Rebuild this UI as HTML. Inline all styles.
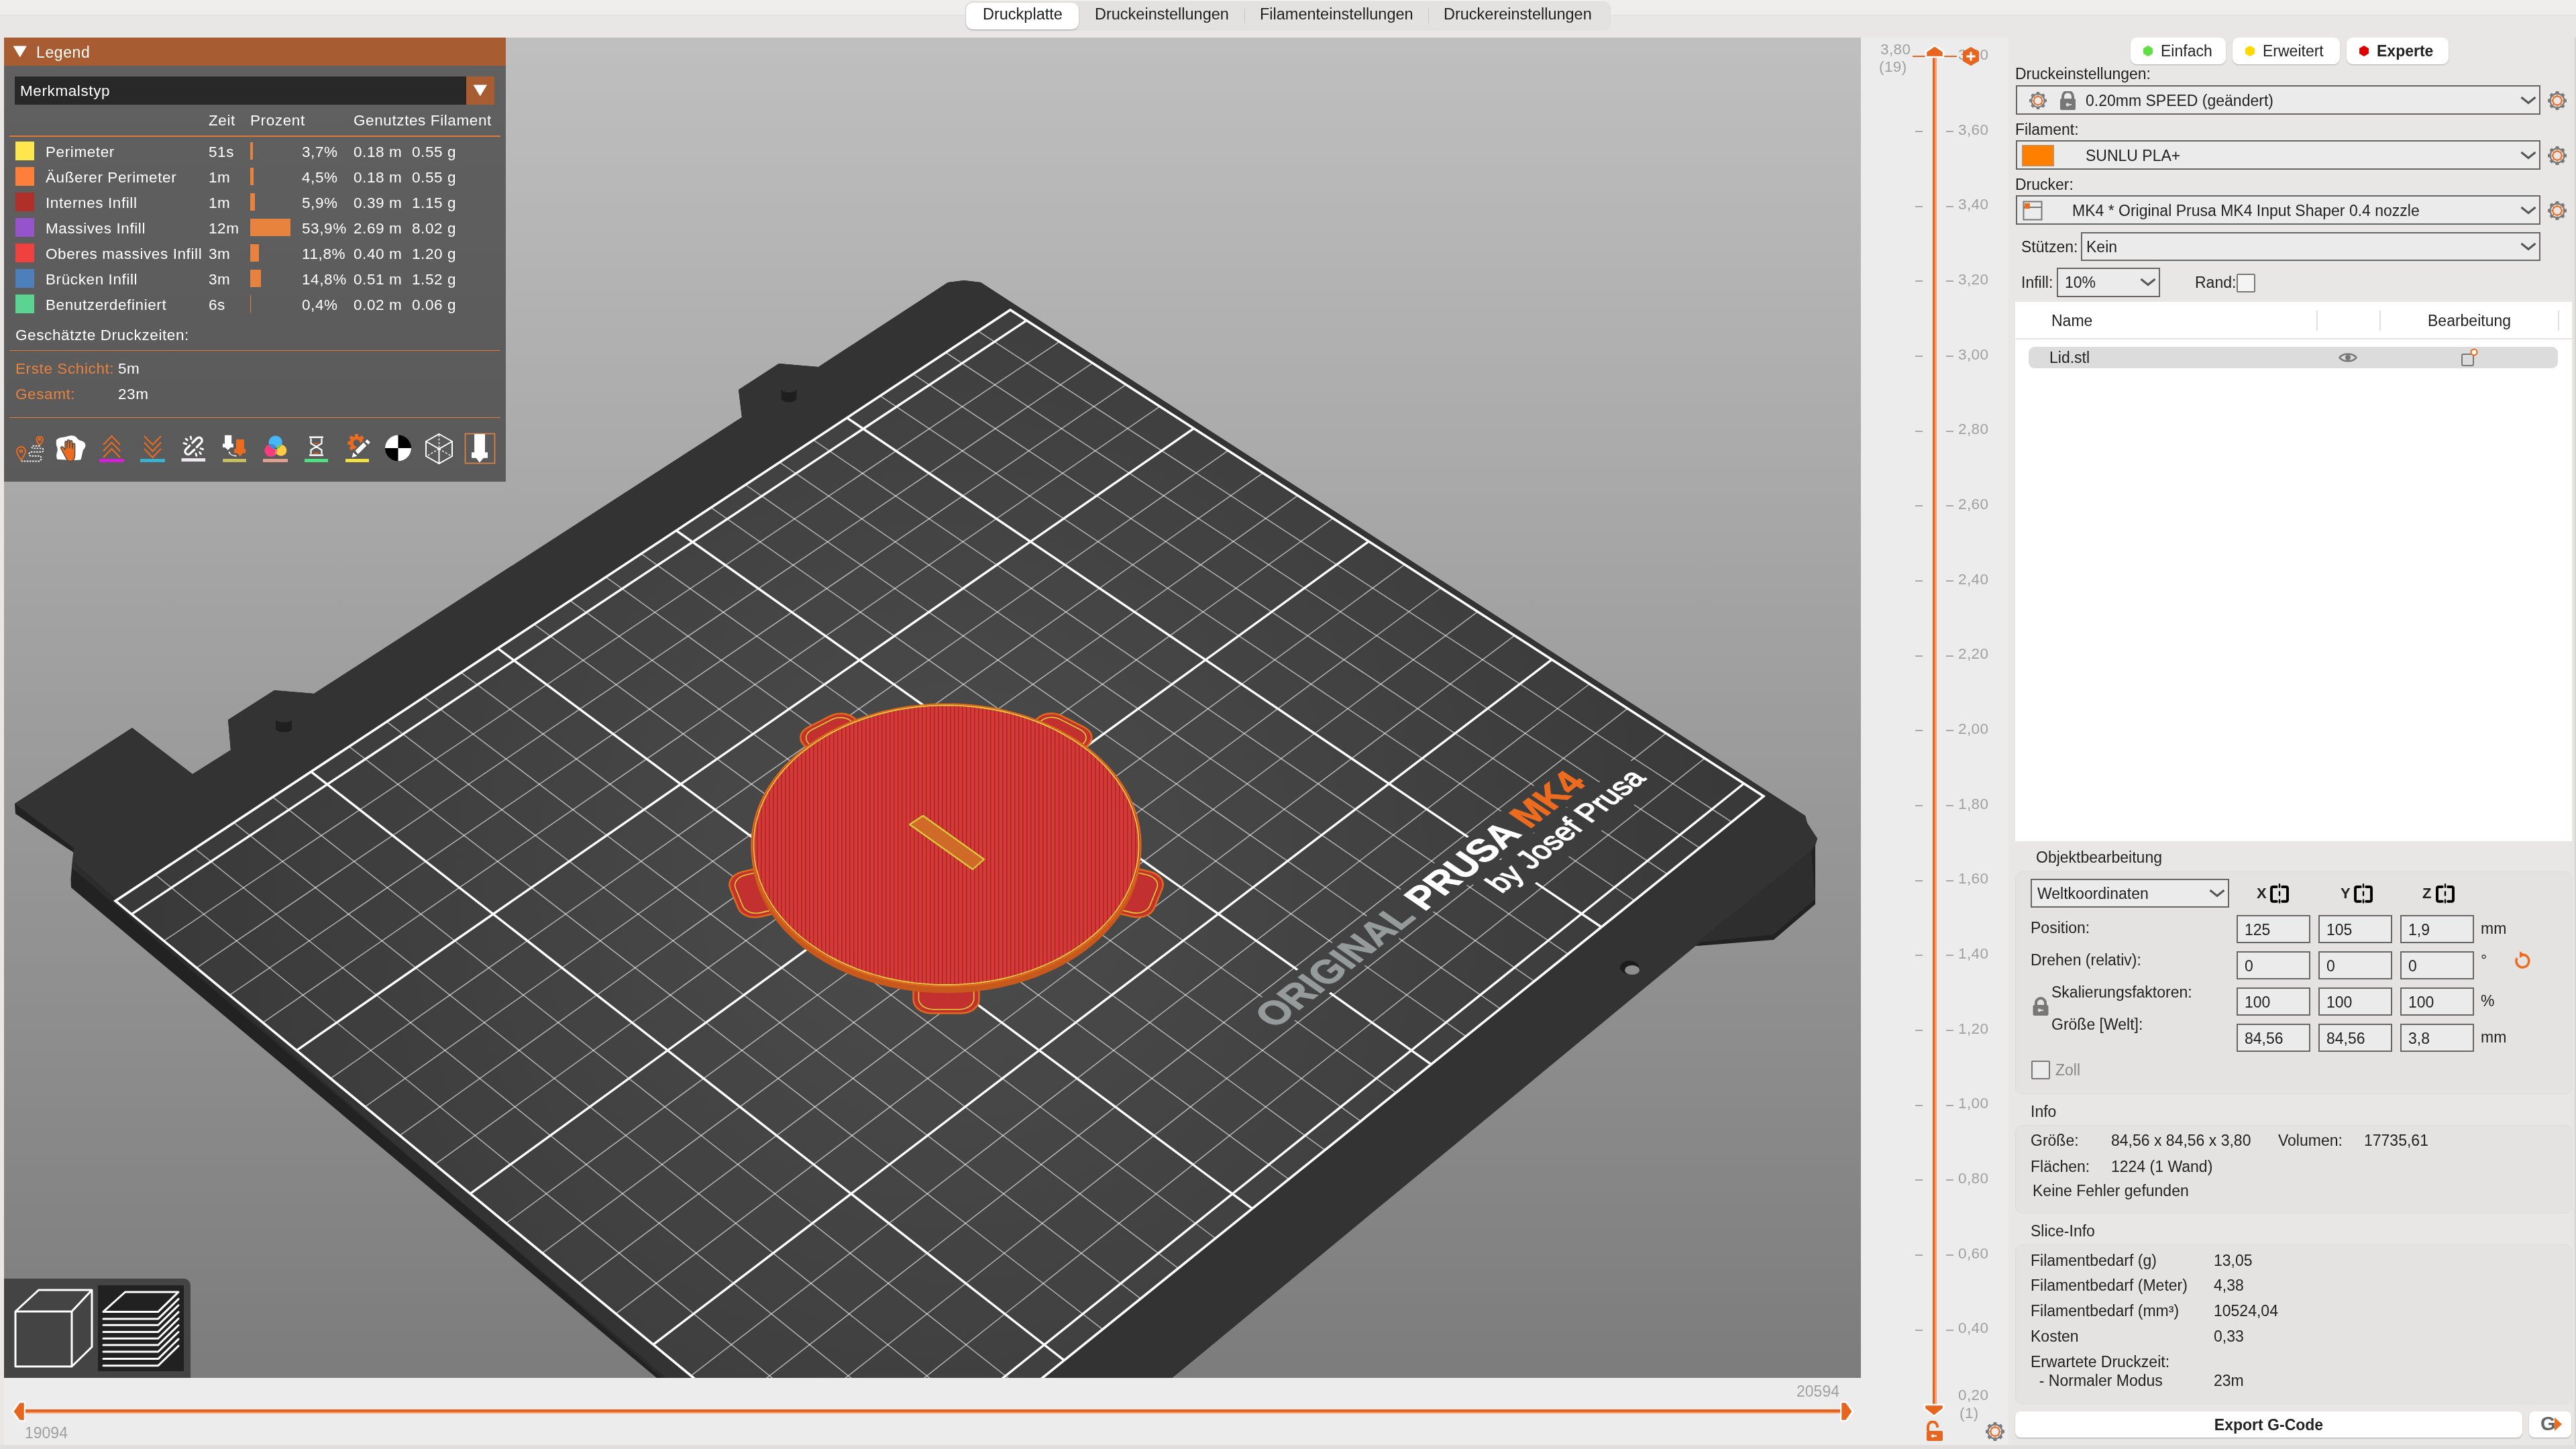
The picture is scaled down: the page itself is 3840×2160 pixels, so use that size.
<!DOCTYPE html>
<html><head><meta charset="utf-8"><style>
*{margin:0;padding:0;box-sizing:border-box}
html,body{width:3840px;height:2160px;overflow:hidden;background:#e8e7e6;font-family:"Liberation Sans",sans-serif;position:relative}
.b{position:absolute}
.t{position:absolute;line-height:1;white-space:nowrap}
.lg{letter-spacing:0.6px}
#canvas{position:absolute;left:6px;top:56px;width:2768px;height:1998px;background:linear-gradient(#bfbfbf,#7c7c7c);overflow:hidden}
#canvas svg.bed{position:absolute;left:0;top:0}
</style></head><body><div style="position:absolute;left:0;top:0;width:3840px;height:2160px;will-change:transform">
<div class="b" style="left:0px;top:0px;width:3840px;height:22px;background:#efeeed"></div>
<div class="b" style="left:0px;top:22px;width:3840px;height:34px;background:#e8e7e6;border-top:1px solid #e2e1e0"></div>
<div class="b" style="left:1439px;top:2px;width:962px;height:43px;background:#e3e2e1;border-radius:11px;border:1px solid #dddcdb"></div>
<div class="b" style="left:1440px;top:4px;width:168px;height:40px;background:#fff;border-radius:10px;box-shadow:0 1px 2px rgba(0,0,0,0.3)"></div>
<div class="t " style="left:1465px;top:9.8px;font-size:23.5px;color:#1e1e1e;">Druckplatte</div>
<div class="t " style="left:1632px;top:9.8px;font-size:23.5px;color:#1e1e1e;">Druckeinstellungen</div>
<div class="t " style="left:1878px;top:9.8px;font-size:23.5px;color:#1e1e1e;">Filamenteinstellungen</div>
<div class="t " style="left:2152px;top:9.8px;font-size:23.5px;color:#1e1e1e;">Druckereinstellungen</div>
<div class="b" style="left:1855px;top:12px;width:1px;height:23px;background:#c8c7c6"></div>
<div class="b" style="left:2129px;top:12px;width:1px;height:23px;background:#c8c7c6"></div>
<div id="canvas">
<svg class="bed" width="2768" height="1998" viewBox="0 0 2768 1998">
<defs>
<radialGradient id="areag" gradientUnits="userSpaceOnUse" cx="1400" cy="1250" r="1200">
<stop offset="0" stop-color="#4c4c4c"/><stop offset="1" stop-color="#393939"/>
</radialGradient>
<pattern id="stripes" patternUnits="userSpaceOnUse" width="6" height="6"><rect width="6" height="6" fill="#d63a36"/><rect width="1.5" height="6" fill="#a82428"/></pattern>
</defs>
<polygon points="1407.0,365.0 1431.0,362.0 1456.0,365.0 2685.0,1160.0 2688.0,1171.0 2703.0,1194.0 2700.0,1204.0 2700.0,1292.0 2638.0,1345.0 2525.0,1354.0 2517.0,1354.0 1734.0,2004.0 980.0,2004.0 100.0,1267.0 99.5,1254.0 102.0,1227.0 104.0,1215.0 17.0,1157.0 16.0,1142.0 191.0,1029.0 281.0,1098.0 338.0,1062.0 334.0,1017.0 403.0,973.0 462.0,978.0 1100.0,566.0 1095.0,525.0 1155.0,486.0 1214.0,491.0 1378.0,384.0" fill="#222222" />
<polygon points="1407.0,365.0 1431.0,362.0 1456.0,365.0 2685.0,1160.0 2688.0,1171.0 2703.0,1194.0 2700.0,1204.0 2694.0,1212.0 1734.0,2004.0 994.0,2004.0 110.0,1245.0 101.6,1238.0 102.0,1227.0 104.0,1208.0 16.0,1142.0 191.0,1029.0 281.0,1098.0 338.0,1062.0 334.0,1017.0 403.0,973.0 462.0,978.0 1100.0,566.0 1095.0,525.0 1155.0,486.0 1214.0,491.0 1378.0,384.0" fill="#333333" />
<polygon points="2694.0,1212.0 2700.0,1284.0 2638.0,1337.0 2525.0,1349.0 2517.0,1354.0" fill="#2e2e2e" />
<polygon points="102.0,1227.0 110.0,1245.0 994.0,2004.0 987.0,2004.0" fill="#2c2c2c" />
<path d="M405,1016 A12,5 0 0 0 429,1016 L429,1030 A12,5.5 0 0 1 405,1030 Z" fill="#1f1f1f"/>
<path d="M1158.5,524 A11.5,5 0 0 0 1181.5,524 L1181.5,538 A11.5,5.5 0 0 1 1158.5,538 Z" fill="#1f1f1f"/>
<ellipse cx="2423" cy="1386" rx="14" ry="10" fill="#1c1c1c"/><ellipse cx="2427" cy="1390" rx="11" ry="7" fill="#8e8e8e"/>
<polygon points="1285.0,2210.0 2623.0,1131.0 1500.0,406.0 166.0,1287.0" fill="url(#areag)"/>
<line x1="1345.3" y1="2161.4" x2="225.4" y2="1247.7" stroke="#ffffff" stroke-width="1.5" stroke-opacity="0.6"/>
<line x1="1405.0" y1="2113.2" x2="284.3" y2="1208.8" stroke="#ffffff" stroke-width="1.5" stroke-opacity="0.6"/>
<line x1="1464.1" y1="2065.6" x2="342.7" y2="1170.3" stroke="#ffffff" stroke-width="1.5" stroke-opacity="0.6"/>
<line x1="1522.5" y1="2018.4" x2="400.5" y2="1132.2" stroke="#ffffff" stroke-width="1.5" stroke-opacity="0.6"/>
<line x1="1637.6" y1="1925.6" x2="514.4" y2="1056.9" stroke="#ffffff" stroke-width="1.5" stroke-opacity="0.6"/>
<line x1="1694.3" y1="1879.9" x2="570.6" y2="1019.8" stroke="#ffffff" stroke-width="1.5" stroke-opacity="0.6"/>
<line x1="1750.4" y1="1834.7" x2="626.3" y2="983.0" stroke="#ffffff" stroke-width="1.5" stroke-opacity="0.6"/>
<line x1="1805.9" y1="1790.0" x2="681.4" y2="946.6" stroke="#ffffff" stroke-width="1.5" stroke-opacity="0.6"/>
<line x1="1915.2" y1="1701.8" x2="790.3" y2="874.7" stroke="#ffffff" stroke-width="1.5" stroke-opacity="0.6"/>
<line x1="1969.1" y1="1658.4" x2="843.9" y2="839.3" stroke="#ffffff" stroke-width="1.5" stroke-opacity="0.6"/>
<line x1="2022.4" y1="1615.4" x2="897.1" y2="804.1" stroke="#ffffff" stroke-width="1.5" stroke-opacity="0.6"/>
<line x1="2075.1" y1="1572.8" x2="949.8" y2="769.3" stroke="#ffffff" stroke-width="1.5" stroke-opacity="0.6"/>
<line x1="2179.2" y1="1488.9" x2="1053.9" y2="700.6" stroke="#ffffff" stroke-width="1.5" stroke-opacity="0.6"/>
<line x1="2230.4" y1="1447.6" x2="1105.2" y2="666.7" stroke="#ffffff" stroke-width="1.5" stroke-opacity="0.6"/>
<line x1="2281.1" y1="1406.7" x2="1156.1" y2="633.1" stroke="#ffffff" stroke-width="1.5" stroke-opacity="0.6"/>
<line x1="2331.4" y1="1366.2" x2="1206.5" y2="599.8" stroke="#ffffff" stroke-width="1.5" stroke-opacity="0.6"/>
<line x1="2430.5" y1="1286.3" x2="1306.0" y2="534.1" stroke="#ffffff" stroke-width="1.5" stroke-opacity="0.6"/>
<line x1="2479.3" y1="1246.9" x2="1355.1" y2="501.7" stroke="#ffffff" stroke-width="1.5" stroke-opacity="0.6"/>
<line x1="2527.6" y1="1207.9" x2="1403.8" y2="469.5" stroke="#ffffff" stroke-width="1.5" stroke-opacity="0.6"/>
<line x1="2575.5" y1="1169.3" x2="1452.1" y2="437.6" stroke="#ffffff" stroke-width="1.5" stroke-opacity="0.6"/>
<line x1="1196.6" y1="2137.1" x2="2535.3" y2="1074.4" stroke="#ffffff" stroke-width="1.5" stroke-opacity="0.6"/>
<line x1="1138.5" y1="2089.1" x2="2477.5" y2="1037.1" stroke="#ffffff" stroke-width="1.5" stroke-opacity="0.6"/>
<line x1="1080.9" y1="2041.7" x2="2420.3" y2="1000.1" stroke="#ffffff" stroke-width="1.5" stroke-opacity="0.6"/>
<line x1="1024.0" y1="1994.8" x2="2363.6" y2="963.5" stroke="#ffffff" stroke-width="1.5" stroke-opacity="0.6"/>
<line x1="912.1" y1="1902.4" x2="2251.8" y2="891.3" stroke="#ffffff" stroke-width="1.5" stroke-opacity="0.6"/>
<line x1="856.9" y1="1856.9" x2="2196.7" y2="855.8" stroke="#ffffff" stroke-width="1.5" stroke-opacity="0.6"/>
<line x1="802.4" y1="1811.9" x2="2142.0" y2="820.5" stroke="#ffffff" stroke-width="1.5" stroke-opacity="0.6"/>
<line x1="748.5" y1="1767.4" x2="2088.0" y2="785.6" stroke="#ffffff" stroke-width="1.5" stroke-opacity="0.6"/>
<line x1="642.2" y1="1679.8" x2="1981.2" y2="716.7" stroke="#ffffff" stroke-width="1.5" stroke-opacity="0.6"/>
<line x1="589.9" y1="1636.6" x2="1928.6" y2="682.7" stroke="#ffffff" stroke-width="1.5" stroke-opacity="0.6"/>
<line x1="538.1" y1="1593.9" x2="1876.5" y2="649.1" stroke="#ffffff" stroke-width="1.5" stroke-opacity="0.6"/>
<line x1="486.9" y1="1551.7" x2="1824.8" y2="615.7" stroke="#ffffff" stroke-width="1.5" stroke-opacity="0.6"/>
<line x1="385.9" y1="1468.4" x2="1722.9" y2="549.9" stroke="#ffffff" stroke-width="1.5" stroke-opacity="0.6"/>
<line x1="336.2" y1="1427.4" x2="1672.6" y2="517.4" stroke="#ffffff" stroke-width="1.5" stroke-opacity="0.6"/>
<line x1="286.9" y1="1386.8" x2="1622.7" y2="485.2" stroke="#ffffff" stroke-width="1.5" stroke-opacity="0.6"/>
<line x1="238.2" y1="1346.6" x2="1573.3" y2="453.3" stroke="#ffffff" stroke-width="1.5" stroke-opacity="0.6"/>
<line x1="1580.4" y1="1971.8" x2="457.7" y2="1094.4" stroke="#ffffff" stroke-width="3.4" stroke-opacity="1"/>
<line x1="1860.8" y1="1745.7" x2="736.1" y2="910.5" stroke="#ffffff" stroke-width="3.4" stroke-opacity="1"/>
<line x1="2127.4" y1="1530.7" x2="1002.1" y2="734.8" stroke="#ffffff" stroke-width="3.4" stroke-opacity="1"/>
<line x1="2381.2" y1="1326.0" x2="1256.5" y2="566.8" stroke="#ffffff" stroke-width="3.4" stroke-opacity="1"/>
<line x1="1255.4" y1="2185.6" x2="2593.6" y2="1112.0" stroke="#ffffff" stroke-width="3.4" stroke-opacity="1"/>
<line x1="967.8" y1="1948.3" x2="2307.4" y2="927.2" stroke="#ffffff" stroke-width="3.4" stroke-opacity="1"/>
<line x1="695.0" y1="1723.4" x2="2034.4" y2="751.0" stroke="#ffffff" stroke-width="3.4" stroke-opacity="1"/>
<line x1="436.1" y1="1509.8" x2="1773.6" y2="582.6" stroke="#ffffff" stroke-width="3.4" stroke-opacity="1"/>
<line x1="190.0" y1="1306.8" x2="1524.3" y2="421.7" stroke="#ffffff" stroke-width="3.4" stroke-opacity="1"/>
<polygon points="1892.4,1489.8 2372.5,1112.9 2324.3,1081.2 1844.1,1455.1" fill="url(#areag)"/>
<polygon points="2238.4,1295.4 2473.1,1109.4 2421.7,1075.9 2186.8,1260.3" fill="url(#areag)"/>
<polygon points="1285.0,2210.0 2623.0,1131.0 1500.0,406.0 166.0,1287.0" fill="none" stroke="#fff" stroke-width="3.6"/>
</svg>
<div style="position:absolute;left:0;top:0;width:2500px;height:2100px;transform-origin:0 0;transform:matrix3d(0.60526888,-0.33300162,0,0.0000477793,0.46968175,0.33087196,0,-0.0000491637,0,0,1,0,166.0000,1287.0000,0,1)"><div style="position:absolute;left:1355.0px;top:1758.9px;font-size:84.0px;line-height:1;white-space:nowrap;font-weight:bold;color:#959a9b;"><span style="-webkit-text-stroke:2px #959a9b">ORIGINAL</span> <span style="color:#fff;-webkit-text-stroke:2px #fff">PRUSA</span> <span style="color:#ec6b1f;-webkit-text-stroke:2px #ec6b1f">MK4</span></div>
<div style="position:absolute;left:1930.0px;top:1848.3px;font-size:67.0px;line-height:1;white-space:nowrap;font-weight:normal;color:#fff;-webkit-text-stroke:2.5px #fff">by Josef Prusa</div></div>
<svg class="bed" width="2768" height="1998" viewBox="0 0 2768 1998">
<path d="M1573.7,1097.2 L1616.7,1053.8 L1619.5,1050.2 L1621.0,1046.3 L1621.3,1042.2 L1620.3,1038.1 L1618.0,1034.3 L1614.6,1030.9 L1610.3,1028.1 L1576.4,1011.0 L1571.3,1008.9 L1565.8,1007.8 L1560.0,1007.5 L1554.3,1008.1 L1549.0,1009.7 L1544.3,1012.0 L1540.5,1015.0 L1497.2,1057.9Z" fill="#c23030" stroke="#e06a1a" stroke-width="2.6"/>
<path d="M1567.6,1094.0 L1609.4,1052.0 L1611.6,1049.1 L1612.8,1046.0 L1613.0,1042.7 L1612.2,1039.4 L1610.4,1036.4 L1607.7,1033.7 L1604.2,1031.5 L1574.0,1016.1 L1569.9,1014.5 L1565.5,1013.6 L1560.9,1013.3 L1556.3,1013.8 L1552.0,1015.1 L1548.3,1016.9 L1545.2,1019.4 L1503.2,1061.0Z" fill="none" stroke="#e0d030" stroke-width="1.6"/>
<path d="M1311.3,1058.0 L1268.1,1015.2 L1264.2,1012.2 L1259.5,1009.9 L1254.2,1008.4 L1248.5,1007.7 L1242.7,1008.0 L1237.2,1009.2 L1232.1,1011.2 L1198.3,1028.4 L1194.0,1031.2 L1190.6,1034.6 L1188.3,1038.4 L1187.3,1042.4 L1187.6,1046.5 L1189.2,1050.5 L1191.9,1054.1 L1235.0,1097.3Z" fill="#c23030" stroke="#e06a1a" stroke-width="2.6"/>
<path d="M1305.3,1061.2 L1263.3,1019.5 L1260.3,1017.1 L1256.5,1015.3 L1252.2,1014.1 L1247.7,1013.5 L1243.1,1013.8 L1238.6,1014.7 L1234.6,1016.3 L1204.4,1031.7 L1200.9,1033.9 L1198.2,1036.6 L1196.4,1039.7 L1195.6,1042.9 L1195.8,1046.2 L1197.1,1049.4 L1199.3,1052.3 L1241.1,1094.2Z" fill="none" stroke="#e0d030" stroke-width="1.6"/>
<path d="M1173.7,1226.5 L1100.4,1243.7 L1094.9,1245.5 L1090.1,1248.1 L1086.2,1251.5 L1083.3,1255.3 L1081.7,1259.5 L1081.4,1263.9 L1082.4,1268.1 L1094.5,1297.8 L1096.8,1301.8 L1100.3,1305.3 L1104.8,1308.2 L1110.1,1310.2 L1115.8,1311.2 L1121.8,1311.3 L1127.7,1310.4 L1201.6,1292.9Z" fill="#c23030" stroke="#e06a1a" stroke-width="2.6"/>
<path d="M1175.9,1231.7 L1104.7,1248.4 L1100.4,1249.9 L1096.5,1252.0 L1093.4,1254.7 L1091.1,1257.7 L1089.8,1261.1 L1089.5,1264.6 L1090.4,1268.0 L1101.1,1294.5 L1103.0,1297.7 L1105.8,1300.5 L1109.4,1302.8 L1113.6,1304.4 L1118.2,1305.2 L1123.0,1305.3 L1127.7,1304.6 L1199.3,1287.6Z" fill="none" stroke="#e0d030" stroke-width="1.6"/>
<path d="M1355.9,1376.2 L1355.6,1434.2 L1356.3,1438.7 L1358.3,1443.0 L1361.5,1446.9 L1365.8,1450.1 L1370.9,1452.5 L1376.7,1454.0 L1382.8,1454.5 L1426.3,1454.5 L1432.4,1454.0 L1438.2,1452.5 L1443.3,1450.1 L1447.6,1446.9 L1450.8,1443.0 L1452.8,1438.7 L1453.5,1434.2 L1453.1,1376.1Z" fill="#c23030" stroke="#e06a1a" stroke-width="2.6"/>
<path d="M1363.6,1376.2 L1363.4,1432.5 L1363.9,1436.1 L1365.5,1439.5 L1368.1,1442.6 L1371.5,1445.2 L1375.7,1447.1 L1380.3,1448.3 L1385.1,1448.7 L1424.0,1448.7 L1428.8,1448.3 L1433.4,1447.1 L1437.6,1445.2 L1441.0,1442.6 L1443.6,1439.5 L1445.2,1436.1 L1445.7,1432.5 L1445.4,1376.1Z" fill="none" stroke="#e0d030" stroke-width="1.6"/>
<path d="M1607.4,1292.8 L1681.4,1310.3 L1687.3,1311.2 L1693.3,1311.1 L1699.1,1310.0 L1704.3,1308.0 L1708.8,1305.2 L1712.3,1301.7 L1714.6,1297.7 L1726.7,1267.9 L1727.7,1263.7 L1727.4,1259.3 L1725.8,1255.1 L1722.9,1251.2 L1718.9,1247.9 L1714.1,1245.3 L1708.6,1243.5 L1635.2,1226.3Z" fill="#c23030" stroke="#e06a1a" stroke-width="2.6"/>
<path d="M1609.6,1287.5 L1681.4,1304.4 L1686.1,1305.1 L1690.9,1305.0 L1695.5,1304.2 L1699.7,1302.6 L1703.3,1300.3 L1706.1,1297.5 L1708.0,1294.3 L1718.7,1267.8 L1719.5,1264.4 L1719.3,1260.9 L1718.0,1257.5 L1715.7,1254.4 L1712.6,1251.8 L1708.7,1249.7 L1704.3,1248.2 L1633.0,1231.5Z" fill="none" stroke="#e0d030" stroke-width="1.6"/>
<path d="M1605.7,1062.2 L1598.4,1057.3 L1590.9,1052.6 L1583.2,1048.0 L1575.3,1043.7 L1567.2,1039.6 L1558.9,1035.6 L1550.4,1031.9 L1541.8,1028.4 L1533.0,1025.1 L1524.0,1022.0 L1514.9,1019.2 L1505.7,1016.6 L1496.4,1014.2 L1487.0,1012.0 L1477.5,1010.1 L1467.9,1008.4 L1458.2,1007.0 L1448.5,1005.8 L1438.7,1004.8 L1428.9,1004.1 L1419.0,1003.6 L1409.2,1003.4 L1399.3,1003.4 L1389.4,1003.6 L1379.6,1004.1 L1369.8,1004.9 L1360.0,1005.9 L1350.3,1007.1 L1340.6,1008.5 L1331.0,1010.2 L1321.5,1012.2 L1312.1,1014.3 L1302.8,1016.7 L1293.6,1019.4 L1284.5,1022.2 L1275.6,1025.3 L1266.8,1028.6 L1258.2,1032.1 L1249.7,1035.8 L1241.4,1039.8 L1233.3,1043.9 L1225.4,1048.3 L1217.7,1052.8 L1210.2,1057.5 L1202.9,1062.4 L1195.9,1067.5 L1189.1,1072.8 L1182.6,1078.3 L1176.3,1083.9 L1170.3,1089.6 L1164.5,1095.5 L1159.0,1101.6 L1153.9,1107.8 L1149.0,1114.1 L1144.4,1120.6 L1140.1,1127.1 L1136.1,1133.8 L1132.5,1140.6 L1129.1,1147.5 L1126.1,1154.4 L1123.5,1161.5 L1121.1,1168.6 L1119.1,1175.7 L1117.5,1182.9 L1116.2,1190.2 L1115.2,1197.5 L1114.6,1204.8 L1114.3,1212.2 L1114.4,1219.5 L1114.9,1226.9 L1115.7,1234.2 L1116.8,1241.5 L1118.4,1248.8 L1120.2,1256.1 L1122.4,1263.3 L1125.0,1270.4 L1127.9,1277.5 L1131.2,1284.6 L1134.8,1291.5 L1138.7,1298.4 L1143.0,1305.1 L1147.6,1311.7 L1152.5,1318.3 L1157.8,1324.7 L1163.3,1330.9 L1169.2,1337.1 L1175.4,1343.0 L1181.8,1348.8 L1188.6,1354.5 L1195.6,1360.0 L1202.9,1365.3 L1210.4,1370.4 L1218.2,1375.3 L1226.3,1380.0 L1234.5,1384.5 L1243.0,1388.8 L1251.7,1392.8 L1260.6,1396.7 L1269.7,1400.3 L1279.0,1403.7 L1288.4,1406.8 L1298.0,1409.7 L1307.7,1412.3 L1317.6,1414.7 L1327.5,1416.8 L1337.6,1418.7 L1347.7,1420.3 L1358.0,1421.7 L1368.2,1422.7 L1378.6,1423.5 L1388.9,1424.1 L1399.3,1424.3 L1409.7,1424.3 L1420.1,1424.1 L1430.5,1423.5 L1440.8,1422.7 L1451.1,1421.6 L1461.3,1420.3 L1471.5,1418.7 L1481.5,1416.8 L1491.5,1414.7 L1501.4,1412.3 L1511.1,1409.7 L1520.7,1406.8 L1530.1,1403.6 L1539.4,1400.2 L1548.4,1396.6 L1557.3,1392.8 L1566.0,1388.7 L1574.5,1384.4 L1582.8,1379.9 L1590.9,1375.2 L1598.7,1370.3 L1606.2,1365.2 L1613.5,1359.9 L1620.5,1354.4 L1627.3,1348.7 L1633.7,1342.9 L1639.9,1336.9 L1645.8,1330.8 L1651.3,1324.5 L1656.6,1318.1 L1661.5,1311.6 L1666.1,1304.9 L1670.3,1298.2 L1674.3,1291.3 L1677.9,1284.4 L1681.1,1277.4 L1684.0,1270.3 L1686.6,1263.1 L1688.8,1255.9 L1690.7,1248.6 L1692.2,1241.3 L1693.3,1234.0 L1694.1,1226.6 L1694.5,1219.3 L1694.6,1211.9 L1694.4,1204.6 L1693.7,1197.3 L1692.8,1190.0 L1691.4,1182.7 L1689.8,1175.5 L1687.8,1168.3 L1685.4,1161.2 L1682.7,1154.2 L1679.7,1147.2 L1676.4,1140.3 L1672.7,1133.5 L1668.7,1126.9 L1664.4,1120.3 L1659.8,1113.8 L1654.9,1107.5 L1649.7,1101.3 L1644.2,1095.3 L1638.5,1089.4 L1632.4,1083.6 L1626.1,1078.0 L1619.6,1072.6 L1612.8,1067.3Z" fill="#c8581c"/>
<path d="M1605.7,1052.2 L1598.4,1047.3 L1590.9,1042.6 L1583.2,1038.0 L1575.3,1033.7 L1567.2,1029.6 L1558.9,1025.6 L1550.4,1021.9 L1541.8,1018.4 L1533.0,1015.1 L1524.0,1012.0 L1514.9,1009.2 L1505.7,1006.6 L1496.4,1004.2 L1487.0,1002.0 L1477.5,1000.1 L1467.9,998.4 L1458.2,997.0 L1448.5,995.8 L1438.7,994.8 L1428.9,994.1 L1419.0,993.6 L1409.2,993.4 L1399.3,993.4 L1389.4,993.6 L1379.6,994.1 L1369.8,994.9 L1360.0,995.9 L1350.3,997.1 L1340.6,998.5 L1331.0,1000.2 L1321.5,1002.2 L1312.1,1004.3 L1302.8,1006.7 L1293.6,1009.4 L1284.5,1012.2 L1275.6,1015.3 L1266.8,1018.6 L1258.2,1022.1 L1249.7,1025.8 L1241.4,1029.8 L1233.3,1033.9 L1225.4,1038.3 L1217.7,1042.8 L1210.2,1047.5 L1202.9,1052.4 L1195.9,1057.5 L1189.1,1062.8 L1182.6,1068.3 L1176.3,1073.9 L1170.3,1079.6 L1164.5,1085.5 L1159.0,1091.6 L1153.9,1097.8 L1149.0,1104.1 L1144.4,1110.6 L1140.1,1117.1 L1136.1,1123.8 L1132.5,1130.6 L1129.1,1137.5 L1126.1,1144.4 L1123.5,1151.5 L1121.1,1158.6 L1119.1,1165.7 L1117.5,1172.9 L1116.2,1180.2 L1115.2,1187.5 L1114.6,1194.8 L1114.3,1202.2 L1114.4,1209.5 L1114.9,1216.9 L1115.7,1224.2 L1116.8,1231.5 L1118.4,1238.8 L1120.2,1246.1 L1122.4,1253.3 L1125.0,1260.4 L1127.9,1267.5 L1131.2,1274.6 L1134.8,1281.5 L1138.7,1288.4 L1143.0,1295.1 L1147.6,1301.7 L1152.5,1308.3 L1157.8,1314.7 L1163.3,1320.9 L1169.2,1327.1 L1175.4,1333.0 L1181.8,1338.8 L1188.6,1344.5 L1195.6,1350.0 L1202.9,1355.3 L1210.4,1360.4 L1218.2,1365.3 L1226.3,1370.0 L1234.5,1374.5 L1243.0,1378.8 L1251.7,1382.8 L1260.6,1386.7 L1269.7,1390.3 L1279.0,1393.7 L1288.4,1396.8 L1298.0,1399.7 L1307.7,1402.3 L1317.6,1404.7 L1327.5,1406.8 L1337.6,1408.7 L1347.7,1410.3 L1358.0,1411.7 L1368.2,1412.7 L1378.6,1413.5 L1388.9,1414.1 L1399.3,1414.3 L1409.7,1414.3 L1420.1,1414.1 L1430.5,1413.5 L1440.8,1412.7 L1451.1,1411.6 L1461.3,1410.3 L1471.5,1408.7 L1481.5,1406.8 L1491.5,1404.7 L1501.4,1402.3 L1511.1,1399.7 L1520.7,1396.8 L1530.1,1393.6 L1539.4,1390.2 L1548.4,1386.6 L1557.3,1382.8 L1566.0,1378.7 L1574.5,1374.4 L1582.8,1369.9 L1590.9,1365.2 L1598.7,1360.3 L1606.2,1355.2 L1613.5,1349.9 L1620.5,1344.4 L1627.3,1338.7 L1633.7,1332.9 L1639.9,1326.9 L1645.8,1320.8 L1651.3,1314.5 L1656.6,1308.1 L1661.5,1301.6 L1666.1,1294.9 L1670.3,1288.2 L1674.3,1281.3 L1677.9,1274.4 L1681.1,1267.4 L1684.0,1260.3 L1686.6,1253.1 L1688.8,1245.9 L1690.7,1238.6 L1692.2,1231.3 L1693.3,1224.0 L1694.1,1216.6 L1694.5,1209.3 L1694.6,1201.9 L1694.4,1194.6 L1693.7,1187.3 L1692.8,1180.0 L1691.4,1172.7 L1689.8,1165.5 L1687.8,1158.3 L1685.4,1151.2 L1682.7,1144.2 L1679.7,1137.2 L1676.4,1130.3 L1672.7,1123.5 L1668.7,1116.9 L1664.4,1110.3 L1659.8,1103.8 L1654.9,1097.5 L1649.7,1091.3 L1644.2,1085.3 L1638.5,1079.4 L1632.4,1073.6 L1626.1,1068.0 L1619.6,1062.6 L1612.8,1057.3Z" fill="url(#stripes)" stroke="#e06a1a" stroke-width="2"/>
<path d="M1603.6,1053.7 L1596.4,1048.8 L1589.0,1044.2 L1581.4,1039.7 L1573.5,1035.4 L1565.5,1031.3 L1557.3,1027.4 L1548.9,1023.7 L1540.4,1020.2 L1531.6,1017.0 L1522.8,1013.9 L1513.8,1011.1 L1504.7,1008.5 L1495.5,1006.2 L1486.1,1004.0 L1476.7,1002.1 L1467.2,1000.5 L1457.6,999.0 L1448.0,997.8 L1438.3,996.9 L1428.6,996.2 L1418.9,995.7 L1409.1,995.5 L1399.3,995.5 L1389.6,995.7 L1379.8,996.2 L1370.1,996.9 L1360.4,997.9 L1350.8,999.1 L1341.3,1000.6 L1331.8,1002.2 L1322.3,1004.2 L1313.0,1006.3 L1303.8,1008.7 L1294.7,1011.3 L1285.7,1014.1 L1276.9,1017.1 L1268.2,1020.4 L1259.6,1023.9 L1251.3,1027.6 L1243.1,1031.5 L1235.0,1035.6 L1227.2,1039.9 L1219.6,1044.4 L1212.2,1049.1 L1205.0,1053.9 L1198.0,1059.0 L1191.3,1064.2 L1184.8,1069.6 L1178.6,1075.1 L1172.7,1080.8 L1167.0,1086.7 L1161.6,1092.7 L1156.4,1098.8 L1151.6,1105.1 L1147.1,1111.5 L1142.8,1118.0 L1138.9,1124.6 L1135.3,1131.3 L1132.0,1138.1 L1129.0,1145.0 L1126.4,1151.9 L1124.1,1159.0 L1122.1,1166.1 L1120.5,1173.2 L1119.2,1180.4 L1118.2,1187.6 L1117.6,1194.9 L1117.4,1202.1 L1117.5,1209.4 L1117.9,1216.7 L1118.7,1223.9 L1119.8,1231.2 L1121.3,1238.4 L1123.2,1245.6 L1125.4,1252.7 L1127.9,1259.8 L1130.8,1266.8 L1134.0,1273.8 L1137.6,1280.6 L1141.5,1287.4 L1145.7,1294.1 L1150.3,1300.7 L1155.2,1307.1 L1160.4,1313.4 L1165.9,1319.6 L1171.7,1325.7 L1177.8,1331.6 L1184.2,1337.4 L1190.8,1342.9 L1197.8,1348.4 L1205.0,1353.6 L1212.5,1358.6 L1220.2,1363.5 L1228.2,1368.2 L1236.3,1372.6 L1244.7,1376.9 L1253.3,1380.9 L1262.2,1384.7 L1271.1,1388.3 L1280.3,1391.6 L1289.6,1394.7 L1299.1,1397.5 L1308.7,1400.1 L1318.5,1402.5 L1328.3,1404.6 L1338.3,1406.5 L1348.3,1408.0 L1358.4,1409.4 L1368.6,1410.4 L1378.8,1411.2 L1389.1,1411.8 L1399.4,1412.0 L1409.7,1412.0 L1419.9,1411.8 L1430.2,1411.2 L1440.4,1410.4 L1450.6,1409.4 L1460.7,1408.0 L1470.8,1406.4 L1480.7,1404.6 L1490.6,1402.5 L1500.3,1400.1 L1509.9,1397.5 L1519.4,1394.6 L1528.7,1391.5 L1537.9,1388.2 L1546.9,1384.6 L1555.7,1380.8 L1564.3,1376.8 L1572.7,1372.6 L1580.9,1368.1 L1588.9,1363.4 L1596.6,1358.6 L1604.1,1353.5 L1611.3,1348.3 L1618.2,1342.8 L1624.9,1337.2 L1631.3,1331.5 L1637.4,1325.6 L1643.2,1319.5 L1648.7,1313.3 L1653.9,1307.0 L1658.8,1300.5 L1663.3,1293.9 L1667.5,1287.2 L1671.4,1280.5 L1675.0,1273.6 L1678.2,1266.6 L1681.1,1259.6 L1683.6,1252.5 L1685.8,1245.4 L1687.7,1238.2 L1689.2,1231.0 L1690.3,1223.7 L1691.1,1216.4 L1691.5,1209.2 L1691.6,1201.9 L1691.3,1194.6 L1690.7,1187.4 L1689.8,1180.1 L1688.5,1173.0 L1686.8,1165.8 L1684.8,1158.7 L1682.5,1151.7 L1679.8,1144.7 L1676.9,1137.8 L1673.6,1131.0 L1669.9,1124.3 L1666.0,1117.7 L1661.7,1111.2 L1657.2,1104.8 L1652.3,1098.6 L1647.2,1092.4 L1641.8,1086.4 L1636.1,1080.6 L1630.1,1074.9 L1623.8,1069.3 L1617.4,1063.9 L1610.6,1058.7Z" fill="none" stroke="#e0d040" stroke-width="1.8"/>
<path d="M1370.0,1160.0 L1461.0,1225.0 L1444.0,1240.0 L1350.0,1173.0Z" fill="#d06a28" stroke="#d8cc38" stroke-width="2.2" stroke-linejoin="round"/>
</svg>
</div>
<div class="b" style="left:6px;top:56px;width:748px;height:42px;background:#a85c31"></div>
<div class="b" style="left:6px;top:98px;width:748px;height:620px;background:linear-gradient(#606060,#5a5a5a)"></div>
<svg class="b" style="left:19px;top:68px" width="22" height="18"><polygon points="0.5,0.5 21,0.5 10.75,17.5" fill="#fff"/></svg>
<div class="t lg" style="left:54px;top:66.5px;font-size:23px;color:#fff;">Legend</div>
<div class="b" style="left:22px;top:114px;width:673px;height:42px;background:#282828"></div>
<div class="b" style="left:695px;top:114px;width:42px;height:42px;background:#a85c31"></div>
<svg class="b" style="left:705px;top:126px" width="22" height="18"><polygon points="0.5,0.5 21,0.5 10.75,17.5" fill="#fff"/></svg>
<div class="t lg" style="left:30px;top:124.8px;font-size:22.5px;color:#fff;">Merkmalstyp</div>
<div class="t lg" style="left:311px;top:168.8px;font-size:22.5px;color:#fff;">Zeit</div>
<div class="t lg" style="left:373px;top:168.8px;font-size:22.5px;color:#fff;">Prozent</div>
<div class="t lg" style="left:527px;top:168.8px;font-size:22.5px;color:#fff;">Genutztes Filament</div>
<div class="b" style="left:14px;top:202px;width:732px;height:1.5px;background:#e07a3a"></div>
<div class="b" style="left:23px;top:211px;width:28px;height:28px;background:#ffe64d"></div>
<div class="t lg" style="left:68px;top:215.8px;font-size:22.5px;color:#fff;">Perimeter</div>
<div class="t lg" style="left:311px;top:215.8px;font-size:22.5px;color:#fff;">51s</div>
<div class="b" style="left:373px;top:212px;width:4px;height:26px;background:#e8823f"></div>
<div class="t lg" style="left:450px;top:215.8px;font-size:22.5px;color:#fff;">3,7%</div>
<div class="t lg" style="left:527px;top:215.8px;font-size:22.5px;color:#fff;">0.18 m</div>
<div class="t lg" style="left:614px;top:215.8px;font-size:22.5px;color:#fff;">0.55 g</div>
<div class="b" style="left:23px;top:249px;width:28px;height:28px;background:#ff7f3a"></div>
<div class="t lg" style="left:68px;top:253.8px;font-size:22.5px;color:#fff;">Äußerer Perimeter</div>
<div class="t lg" style="left:311px;top:253.8px;font-size:22.5px;color:#fff;">1m</div>
<div class="b" style="left:373px;top:250px;width:5px;height:26px;background:#e8823f"></div>
<div class="t lg" style="left:450px;top:253.8px;font-size:22.5px;color:#fff;">4,5%</div>
<div class="t lg" style="left:527px;top:253.8px;font-size:22.5px;color:#fff;">0.18 m</div>
<div class="t lg" style="left:614px;top:253.8px;font-size:22.5px;color:#fff;">0.55 g</div>
<div class="b" style="left:23px;top:287px;width:28px;height:28px;background:#b03029"></div>
<div class="t lg" style="left:68px;top:291.8px;font-size:22.5px;color:#fff;">Internes Infill</div>
<div class="t lg" style="left:311px;top:291.8px;font-size:22.5px;color:#fff;">1m</div>
<div class="b" style="left:373px;top:288px;width:7px;height:26px;background:#e8823f"></div>
<div class="t lg" style="left:450px;top:291.8px;font-size:22.5px;color:#fff;">5,9%</div>
<div class="t lg" style="left:527px;top:291.8px;font-size:22.5px;color:#fff;">0.39 m</div>
<div class="t lg" style="left:614px;top:291.8px;font-size:22.5px;color:#fff;">1.15 g</div>
<div class="b" style="left:23px;top:325px;width:28px;height:28px;background:#9654cc"></div>
<div class="t lg" style="left:68px;top:329.8px;font-size:22.5px;color:#fff;">Massives Infill</div>
<div class="t lg" style="left:311px;top:329.8px;font-size:22.5px;color:#fff;">12m</div>
<div class="b" style="left:373px;top:326px;width:60px;height:26px;background:#e8823f"></div>
<div class="t lg" style="left:450px;top:329.8px;font-size:22.5px;color:#fff;">53,9%</div>
<div class="t lg" style="left:527px;top:329.8px;font-size:22.5px;color:#fff;">2.69 m</div>
<div class="t lg" style="left:614px;top:329.8px;font-size:22.5px;color:#fff;">8.02 g</div>
<div class="b" style="left:23px;top:363px;width:28px;height:28px;background:#f04040"></div>
<div class="t lg" style="left:68px;top:367.8px;font-size:22.5px;color:#fff;">Oberes massives Infill</div>
<div class="t lg" style="left:311px;top:367.8px;font-size:22.5px;color:#fff;">3m</div>
<div class="b" style="left:373px;top:364px;width:13px;height:26px;background:#e8823f"></div>
<div class="t lg" style="left:450px;top:367.8px;font-size:22.5px;color:#fff;">11,8%</div>
<div class="t lg" style="left:527px;top:367.8px;font-size:22.5px;color:#fff;">0.40 m</div>
<div class="t lg" style="left:614px;top:367.8px;font-size:22.5px;color:#fff;">1.20 g</div>
<div class="b" style="left:23px;top:401px;width:28px;height:28px;background:#4d80ba"></div>
<div class="t lg" style="left:68px;top:405.8px;font-size:22.5px;color:#fff;">Brücken Infill</div>
<div class="t lg" style="left:311px;top:405.8px;font-size:22.5px;color:#fff;">3m</div>
<div class="b" style="left:373px;top:402px;width:16px;height:26px;background:#e8823f"></div>
<div class="t lg" style="left:450px;top:405.8px;font-size:22.5px;color:#fff;">14,8%</div>
<div class="t lg" style="left:527px;top:405.8px;font-size:22.5px;color:#fff;">0.51 m</div>
<div class="t lg" style="left:614px;top:405.8px;font-size:22.5px;color:#fff;">1.52 g</div>
<div class="b" style="left:23px;top:439px;width:28px;height:28px;background:#5ad490"></div>
<div class="t lg" style="left:68px;top:443.8px;font-size:22.5px;color:#fff;">Benutzerdefiniert</div>
<div class="t lg" style="left:311px;top:443.8px;font-size:22.5px;color:#fff;">6s</div>
<div class="b" style="left:373px;top:440px;width:1px;height:26px;background:#e8823f"></div>
<div class="t lg" style="left:450px;top:443.8px;font-size:22.5px;color:#fff;">0,4%</div>
<div class="t lg" style="left:527px;top:443.8px;font-size:22.5px;color:#fff;">0.02 m</div>
<div class="t lg" style="left:614px;top:443.8px;font-size:22.5px;color:#fff;">0.06 g</div>
<div class="t lg" style="left:23px;top:488.8px;font-size:22.5px;color:#fff;">Geschätzte Druckzeiten:</div>
<div class="b" style="left:14px;top:521.5px;width:732px;height:1.5px;background:#e07a3a"></div>
<div class="t lg" style="left:23px;top:538.8px;font-size:22.5px;color:#e8823f;">Erste Schicht:</div>
<div class="t lg" style="left:176px;top:538.8px;font-size:22.5px;color:#fff;">5m</div>
<div class="t lg" style="left:23px;top:576.8px;font-size:22.5px;color:#e8823f;">Gesamt:</div>
<div class="t lg" style="left:176px;top:576.8px;font-size:22.5px;color:#fff;">23m</div>
<div class="b" style="left:14px;top:621.5px;width:732px;height:1.5px;background:#e07a3a"></div>
<svg class="b" style="left:10px;top:640px" width="740" height="60" viewBox="0 0 740 60">
<g fill="none" stroke="#ec6b1f" stroke-width="2">
<path d="M21.5,46 C18,40 15,37 15,32.5 A6.5,6.5 0 0 1 28,32.5 C28,37 25,40 21.5,46Z"/><circle cx="21.5" cy="32.5" r="1.8"/>
<path d="M49,24 C46.5,20 44.5,18 44.5,15 A4.8,4.8 0 0 1 54,15 C54,18 51.5,20 49,24Z"/><circle cx="49" cy="15" r="1.3"/>
</g>
<path d="M49.6,24.7 H39.8 C36.8,24.7 36.8,28.4 39.8,28.4 H52.5 C55.5,28.4 55.5,33.8 52,33.8 H36 C32.5,33.8 32.5,39.8 36,39.8 H49 C52.5,39.8 52.5,47.5 48,47.5 H22" fill="none" stroke="#eee" stroke-width="1.9" stroke-dasharray="2.6 1.6"/>
<path d="M74.3,15.4 C78,13 80,12.3 82.7,12.1 C88,11.5 92,9.5 96.2,9.3 C99.5,9.2 101.5,10 103.2,11.2 C105,12.8 106,15 107.8,15.8 C111,17.2 114.5,17.8 115.7,19.6 C117.5,22 117.8,24 117.1,26.1 C116.2,29 113.8,30.5 113.4,32.6 C112.5,37 111.5,43 110.1,45.6 L100.8,46.1 L89.2,45.6 L75.2,44.7 C74,41 74,39 74.3,37.3 C74.8,34 76.2,31.5 75.7,28.9 C75.2,26 73.5,23.5 73.8,21 C74,18.5 73.5,17 74.3,15.4Z" fill="#fff"/>
<path d="M95,47.8 C91,47.8 89,44.5 87.5,41 L80.8,28.5 C79.8,26.3 82.5,24.8 84,26.5 L87,30.5 L87,19.2 C87,17.2 89.9,17.2 89.9,19.2 L89.9,28 L90.5,17.2 C90.5,15.2 93.6,15.2 93.6,17.2 L93.8,28 L94.5,18.3 C94.5,16.3 97.6,16.3 97.6,18.3 L97.8,28.5 L98.5,22.3 C98.5,20.4 101.6,20.4 101.6,22.3 L101.6,38 C101.6,43 99.5,47.8 95,47.8Z" fill="#ec6b1f" stroke="#505050" stroke-width="1.5" stroke-linejoin="round"/>
<g fill="none" stroke="#ec6b1f" stroke-width="2">
<path d="M144,23 L156.5,10 L169,23 M144,32.5 L156.5,19.5 L169,32.5 M144,42 L156.5,29 L169,42"/>
<path d="M205,10 L217.5,23 L230,10 M205,19.5 L217.5,32.5 L230,19.5 M205,29 L217.5,42 L230,29"/>
</g>
<rect x="138" y="44" width="37" height="5" fill="#d020d8"/>
<rect x="199" y="44" width="37" height="5" fill="#38b0d0"/>
<g fill="none" stroke="#fff" stroke-width="3.3" stroke-linecap="round">
<path d="M276.9,20 L283.5,13.5 A4.42,4.42 0 0 1 289.8,19.8 L283.3,26.5 M272.8,24.2 L267.2,29.8 A4.42,4.42 0 0 0 273.5,36.1 L279.8,30.3"/>
</g>
<g fill="none" stroke="#fff" stroke-width="2.8" stroke-linecap="round">
<path d="M274.2,11 L275,14.6 M267,14.2 L269.4,16.1 M263.8,20.6 L267.9,21.8 M289,28.5 L292.6,29.7 M287.5,34.2 L289.4,36.6 M281.9,36.1 L282.9,39.4"/>
</g>
<rect x="260.5" y="43.1" width="35.6" height="4.9" fill="#ece8ec"/>
<path d="M325,8.85 H335.2 V21.4 H337.8 V27 H333.8 L329.9,31 L325.5,27 H322 V21.4 H325Z" fill="#fff"/>
<path d="M342,14.9 H353.9 V29.3 H356.2 V35.4 H352 L347.8,40.3 L343.6,35.4 H339 V29.3 H342Z" fill="#ec6b1f"/>
<path d="M331.5,34.5 C333,37.5 336,39 341.5,39.6" fill="none" stroke="#fff" stroke-width="1.3"/>
<path d="M330.6,33 L333.8,34.2 L331.6,36.2Z M343,39.7 L340,38 L340.3,41Z" fill="#fff"/>
<rect x="322.2" y="44" width="34.7" height="4.9" fill="#c8c060"/>
<defs><clipPath id="cb"><circle cx="400.7" cy="19.6" r="10.1"/></clipPath><clipPath id="cp"><circle cx="393.8" cy="31.6" r="9.5"/></clipPath><clipPath id="cy"><circle cx="408.9" cy="31.4" r="8.4"/></clipPath></defs>
<circle cx="400.7" cy="19.6" r="10.1" fill="#44b8f8"/>
<circle cx="393.8" cy="31.6" r="9.5" fill="#f53c7c"/>
<circle cx="408.9" cy="31.4" r="8.4" fill="#ffcc44"/>
<g clip-path="url(#cb)"><circle cx="393.8" cy="31.6" r="9.5" fill="#3a90d0"/><circle cx="408.9" cy="31.4" r="8.4" fill="#80c050"/><g clip-path="url(#cp)"><circle cx="408.9" cy="31.4" r="8.4" fill="#0a3c64"/></g></g>
<g clip-path="url(#cp)"><rect x="400" y="30" width="4" height="8" fill="#ff7a5a"/></g>
<rect x="382" y="44" width="37" height="5" fill="#e0a090"/>
<g fill="none" stroke="#fff" stroke-width="2.6"><path d="M451,11.8 H472 M451,38.5 H472"/><path d="M453.5,13.6 V21 L461.5,25.9 L453.5,30.8 V36.7 M469.5,13.6 V21 L461.5,25.9 L469.5,30.8 V36.7" stroke-width="2.2" stroke-linejoin="round"/></g>
<path d="M456.8,20.3 H466.2 L461.5,22.6Z M456.6,36.3 C458,33.6 465,33.6 466.4,36.3Z" fill="#ec5a10"/>
<rect x="444" y="44" width="35" height="5" fill="#50e080"/>
<g transform="translate(521.6,20.3)"><circle r="7.6" fill="none" stroke="#ec6b1f" stroke-width="5"/><rect x="-2.6" y="-13.3" width="5.2" height="4.5" fill="#ec6b1f" transform="rotate(0)"/><rect x="-2.6" y="-13.3" width="5.2" height="4.5" fill="#ec6b1f" transform="rotate(45)"/><rect x="-2.6" y="-13.3" width="5.2" height="4.5" fill="#ec6b1f" transform="rotate(90)"/><rect x="-2.6" y="-13.3" width="5.2" height="4.5" fill="#ec6b1f" transform="rotate(135)"/><rect x="-2.6" y="-13.3" width="5.2" height="4.5" fill="#ec6b1f" transform="rotate(180)"/><rect x="-2.6" y="-13.3" width="5.2" height="4.5" fill="#ec6b1f" transform="rotate(225)"/><rect x="-2.6" y="-13.3" width="5.2" height="4.5" fill="#ec6b1f" transform="rotate(270)"/><rect x="-2.6" y="-13.3" width="5.2" height="4.5" fill="#ec6b1f" transform="rotate(315)"/></g>
<path d="M519.6,31.8 L523.7,37 L536.3,24.5 L532.1,19.6Z M514.7,41.9 L516.6,34.6 L522.3,39.8Z M534.2,18.2 L537.4,15 L541.9,19.6 L539.1,22.4Z" fill="#5a5a5a" stroke="#5a5a5a" stroke-width="5" stroke-linejoin="round"/>
<path d="M519.6,31.8 L523.7,37 L536.3,24.5 L532.1,19.6Z M514.7,41.9 L516.6,34.6 L522.3,39.8Z M534.2,18.2 L537.4,15 L541.9,19.6 L539.1,22.4Z" fill="#fff"/>
<rect x="505" y="44" width="35" height="5" fill="#f0e040"/>
<circle cx="583.5" cy="28" r="19.5" fill="#000"/>
<path d="M583.5,8.5 A19.5,19.5 0 0 0 564,28 H583.5Z M583.5,28 V47.5 A19.5,19.5 0 0 0 603,28Z" fill="#fff"/>
<g fill="none" stroke="#fff" stroke-width="2"><path d="M644.5,7 L664,18 V40 L644.5,51 L625,40 V18Z M625,18 L644.5,29 L664,18 M644.5,29 V51"/></g>
<path d="M644.5,8 V29 M644.5,29 L626,40 M644.5,29 L663,40" fill="none" stroke="#fff" stroke-width="1.5" stroke-dasharray="3 2.5"/>
<rect x="683.5" y="6.5" width="44" height="44" fill="none" stroke="#e8823f" stroke-width="1.6"/>
<path d="M697.1,7 H713 V34.3 H717 V42.8 H710.8 L704.9,49.4 L699.7,42.8 H693 V34.3 H697.1Z" fill="#fff"/>
</svg>
<div class="b" style="left:6px;top:1906px;width:278px;height:148px;background:#444;border-top-right-radius:10px"></div>
<div class="b" style="left:146px;top:1916px;width:128px;height:128px;background:#212121"></div>
<svg class="b" style="left:6px;top:1906px" width="278" height="148" viewBox="0 0 278 148">
<g fill="none" stroke="#fff" stroke-width="3" stroke-linejoin="round" stroke-linecap="round">
<path d="M17,49 H101 V131 H17Z M17,49 L51.6,17 H131 L101,49 M131,17 V101.8 L101,131"/>
<path d="M148,49.4 L180.6,20 H260 L229.8,49.4Z"/>
<path d="M148,59.9 H229.8 L260,30.4 M148,69.3 H229.8 L260,39.8 M148,79.4 H229.8 L260,49.9 M148,89.2 H229.8 L260,59.7 M148,99 H229.8 L260,69.5 M148,109 H229.8 L260,79.5 M148,119.6 H229.8 L260,90.1 M148,129.7 H229.8 L260,100.2"/>
</g></svg>
<div class="b" style="left:6px;top:2054px;width:2988px;height:100px;background:#ececec"></div>
<div class="b" style="left:34px;top:2101px;width:2711px;height:6px;background:linear-gradient(#e8601c 0,#e8601c 60%,#f8a070 60%,#f8a070 100%)"></div>
<svg class="b" style="left:16px;top:2087px" width="22" height="34"><polygon points="3,17 13,3 21,3 21,31 13,31" fill="#e8651f" stroke="#fff" stroke-width="2.5"/></svg>
<svg class="b" style="left:2743px;top:2087px" width="22" height="34"><polygon points="19,17 9,3 1,3 1,31 9,31" fill="#e8651f" stroke="#fff" stroke-width="2.5"/></svg>
<div class="t " style="left:37px;top:2124.5px;font-size:23px;color:#a0a0a0;">19094</div>
<div class="t" style="right:1098px;top:2062.5px;font-size:23px;color:#a0a0a0;">20594</div>
<div class="b" style="left:2774px;top:56px;width:220px;height:2098px;background:#ececec"></div>
<div class="b" style="left:2881px;top:84px;width:6px;height:2012px;background:linear-gradient(90deg,#e8601c 0,#e8601c 55%,#f8a070 55%,#f8a070 100%)"></div>
<div class="b" style="left:2851px;top:83px;width:66px;height:2px;background:#e8651f"></div>
<svg class="b" style="left:2868px;top:66px" width="32" height="22"><polygon points="16,2 29,11 29,19 3,19 3,11" fill="#e8651f" stroke="#fff" stroke-width="2.5"/></svg>
<svg class="b" style="left:2866px;top:2091px" width="34" height="22"><polygon points="3,3 31,3 31,9 17,20 3,9" fill="#e8651f" stroke="#fff" stroke-width="2.5"/></svg>
<div class="t " style="left:2803px;top:63.2px;font-size:22.5px;color:#a0a0a0;letter-spacing:0.4px">3,80</div>
<div class="t " style="left:2801px;top:89.2px;font-size:22.5px;color:#a0a0a0;letter-spacing:0.4px">(19)</div>
<div class="t " style="left:2919px;top:70.8px;font-size:22.5px;color:#a0a0a0;letter-spacing:0.4px">3,80</div>
<svg class="b" style="left:2923px;top:69px" width="30" height="30"><polygon points="15,1 27.1,8 27.1,22 15,29 2.9,22 2.9,8" fill="#e8651f"/><path d="M15,8.5 V21.5 M8.5,15 H21.5" stroke="#fff" stroke-width="3"/></svg>
<div class="b" style="left:2855px;top:195px;width:11px;height:2px;background:#a8a8a8"></div>
<div class="b" style="left:2901px;top:195px;width:11px;height:2px;background:#a8a8a8"></div>
<div class="t " style="left:2919px;top:182.7px;font-size:22.5px;color:#a0a0a0;letter-spacing:0.4px">3,60</div>
<div class="b" style="left:2855px;top:307px;width:11px;height:2px;background:#a8a8a8"></div>
<div class="b" style="left:2901px;top:307px;width:11px;height:2px;background:#a8a8a8"></div>
<div class="t " style="left:2919px;top:294.4px;font-size:22.5px;color:#a0a0a0;letter-spacing:0.4px">3,40</div>
<div class="b" style="left:2855px;top:418px;width:11px;height:2px;background:#a8a8a8"></div>
<div class="b" style="left:2901px;top:418px;width:11px;height:2px;background:#a8a8a8"></div>
<div class="t " style="left:2919px;top:406.0px;font-size:22.5px;color:#a0a0a0;letter-spacing:0.4px">3,20</div>
<div class="b" style="left:2855px;top:530px;width:11px;height:2px;background:#a8a8a8"></div>
<div class="b" style="left:2901px;top:530px;width:11px;height:2px;background:#a8a8a8"></div>
<div class="t " style="left:2919px;top:517.7px;font-size:22.5px;color:#a0a0a0;letter-spacing:0.4px">3,00</div>
<div class="b" style="left:2855px;top:642px;width:11px;height:2px;background:#a8a8a8"></div>
<div class="b" style="left:2901px;top:642px;width:11px;height:2px;background:#a8a8a8"></div>
<div class="t " style="left:2919px;top:629.3px;font-size:22.5px;color:#a0a0a0;letter-spacing:0.4px">2,80</div>
<div class="b" style="left:2855px;top:753px;width:11px;height:2px;background:#a8a8a8"></div>
<div class="b" style="left:2901px;top:753px;width:11px;height:2px;background:#a8a8a8"></div>
<div class="t " style="left:2919px;top:741.0px;font-size:22.5px;color:#a0a0a0;letter-spacing:0.4px">2,60</div>
<div class="b" style="left:2855px;top:865px;width:11px;height:2px;background:#a8a8a8"></div>
<div class="b" style="left:2901px;top:865px;width:11px;height:2px;background:#a8a8a8"></div>
<div class="t " style="left:2919px;top:852.7px;font-size:22.5px;color:#a0a0a0;letter-spacing:0.4px">2,40</div>
<div class="b" style="left:2855px;top:977px;width:11px;height:2px;background:#a8a8a8"></div>
<div class="b" style="left:2901px;top:977px;width:11px;height:2px;background:#a8a8a8"></div>
<div class="t " style="left:2919px;top:964.3px;font-size:22.5px;color:#a0a0a0;letter-spacing:0.4px">2,20</div>
<div class="b" style="left:2855px;top:1088px;width:11px;height:2px;background:#a8a8a8"></div>
<div class="b" style="left:2901px;top:1088px;width:11px;height:2px;background:#a8a8a8"></div>
<div class="t " style="left:2919px;top:1076.0px;font-size:22.5px;color:#a0a0a0;letter-spacing:0.4px">2,00</div>
<div class="b" style="left:2855px;top:1200px;width:11px;height:2px;background:#a8a8a8"></div>
<div class="b" style="left:2901px;top:1200px;width:11px;height:2px;background:#a8a8a8"></div>
<div class="t " style="left:2919px;top:1187.6px;font-size:22.5px;color:#a0a0a0;letter-spacing:0.4px">1,80</div>
<div class="b" style="left:2855px;top:1312px;width:11px;height:2px;background:#a8a8a8"></div>
<div class="b" style="left:2901px;top:1312px;width:11px;height:2px;background:#a8a8a8"></div>
<div class="t " style="left:2919px;top:1299.3px;font-size:22.5px;color:#a0a0a0;letter-spacing:0.4px">1,60</div>
<div class="b" style="left:2855px;top:1423px;width:11px;height:2px;background:#a8a8a8"></div>
<div class="b" style="left:2901px;top:1423px;width:11px;height:2px;background:#a8a8a8"></div>
<div class="t " style="left:2919px;top:1411.0px;font-size:22.5px;color:#a0a0a0;letter-spacing:0.4px">1,40</div>
<div class="b" style="left:2855px;top:1535px;width:11px;height:2px;background:#a8a8a8"></div>
<div class="b" style="left:2901px;top:1535px;width:11px;height:2px;background:#a8a8a8"></div>
<div class="t " style="left:2919px;top:1522.6px;font-size:22.5px;color:#a0a0a0;letter-spacing:0.4px">1,20</div>
<div class="b" style="left:2855px;top:1647px;width:11px;height:2px;background:#a8a8a8"></div>
<div class="b" style="left:2901px;top:1647px;width:11px;height:2px;background:#a8a8a8"></div>
<div class="t " style="left:2919px;top:1634.3px;font-size:22.5px;color:#a0a0a0;letter-spacing:0.4px">1,00</div>
<div class="b" style="left:2855px;top:1758px;width:11px;height:2px;background:#a8a8a8"></div>
<div class="b" style="left:2901px;top:1758px;width:11px;height:2px;background:#a8a8a8"></div>
<div class="t " style="left:2919px;top:1745.9px;font-size:22.5px;color:#a0a0a0;letter-spacing:0.4px">0,80</div>
<div class="b" style="left:2855px;top:1870px;width:11px;height:2px;background:#a8a8a8"></div>
<div class="b" style="left:2901px;top:1870px;width:11px;height:2px;background:#a8a8a8"></div>
<div class="t " style="left:2919px;top:1857.6px;font-size:22.5px;color:#a0a0a0;letter-spacing:0.4px">0,60</div>
<div class="b" style="left:2855px;top:1982px;width:11px;height:2px;background:#a8a8a8"></div>
<div class="b" style="left:2901px;top:1982px;width:11px;height:2px;background:#a8a8a8"></div>
<div class="t " style="left:2919px;top:1969.3px;font-size:22.5px;color:#a0a0a0;letter-spacing:0.4px">0,40</div>
<div class="t " style="left:2919px;top:2068.8px;font-size:22.5px;color:#a0a0a0;letter-spacing:0.4px">0,20</div>
<div class="t " style="left:2921px;top:2095.8px;font-size:22.5px;color:#a0a0a0;letter-spacing:0.4px">(1)</div>
<svg class="b" style="left:2870px;top:2118px" width="28" height="32" viewBox="0 0 28 32"><path d="M4,15 V8.5 A7,7 0 0 1 18,8.5 V10" fill="none" stroke="#e8651f" stroke-width="4"/><rect x="2" y="15" width="24" height="15" rx="2" fill="#e8651f"/><circle cx="11" cy="22.5" r="2.2" fill="#fff"/><rect x="11" y="21.5" width="6" height="2" fill="#fff"/></svg>
<svg class="b" style="left:2957.0px;top:2117.0px" width="34" height="34" viewBox="-17.0 -17.0 34.0 34.0"><circle r="10.4" fill="none" stroke="#7a7a7a" stroke-width="2.2"/><g fill="#7a7a7a"><path d="M-3,-10.2 L-2.2,-14 H2.2 L3,-10.2Z" transform="rotate(0)"/><path d="M-3,-10.2 L-2.2,-14 H2.2 L3,-10.2Z" transform="rotate(45)"/><path d="M-3,-10.2 L-2.2,-14 H2.2 L3,-10.2Z" transform="rotate(90)"/><path d="M-3,-10.2 L-2.2,-14 H2.2 L3,-10.2Z" transform="rotate(135)"/><path d="M-3,-10.2 L-2.2,-14 H2.2 L3,-10.2Z" transform="rotate(180)"/><path d="M-3,-10.2 L-2.2,-14 H2.2 L3,-10.2Z" transform="rotate(225)"/><path d="M-3,-10.2 L-2.2,-14 H2.2 L3,-10.2Z" transform="rotate(270)"/><path d="M-3,-10.2 L-2.2,-14 H2.2 L3,-10.2Z" transform="rotate(315)"/></g><circle r="6.6" fill="none" stroke="#ec6b1f" stroke-width="2.0"/><g fill="#ec6b1f"><circle cx="0" cy="-7.4" r="1.2" transform="rotate(0)"/><circle cx="0" cy="-7.4" r="1.2" transform="rotate(45)"/><circle cx="0" cy="-7.4" r="1.2" transform="rotate(90)"/><circle cx="0" cy="-7.4" r="1.2" transform="rotate(135)"/><circle cx="0" cy="-7.4" r="1.2" transform="rotate(180)"/><circle cx="0" cy="-7.4" r="1.2" transform="rotate(225)"/><circle cx="0" cy="-7.4" r="1.2" transform="rotate(270)"/><circle cx="0" cy="-7.4" r="1.2" transform="rotate(315)"/></g></svg>
<div class="b" style="left:3176px;top:56px;width:142px;height:40px;background:#fff;border-radius:9px;box-shadow:0 1px 1.5px rgba(0,0,0,0.25)"></div>
<div class="b" style="left:3328px;top:56px;width:160px;height:40px;background:#fff;border-radius:9px;box-shadow:0 1px 1.5px rgba(0,0,0,0.25)"></div>
<div class="b" style="left:3498px;top:56px;width:152px;height:40px;background:#fff;border-radius:9px;box-shadow:0 1px 1.5px rgba(0,0,0,0.25)"></div>
<svg class="b" style="left:3194px;top:68px" width="16" height="16" viewBox="-8 -8 16 16"><polygon points="0.00,-8.00 6.93,-4.00 6.93,4.00 0.00,8.00 -6.93,4.00 -6.93,-4.00" fill="#5fe040"/></svg>
<svg class="b" style="left:3346px;top:68px" width="16" height="16" viewBox="-8 -8 16 16"><polygon points="0.00,-8.00 6.93,-4.00 6.93,4.00 0.00,8.00 -6.93,4.00 -6.93,-4.00" fill="#ffd800"/></svg>
<svg class="b" style="left:3516px;top:68px" width="16" height="16" viewBox="-8 -8 16 16"><polygon points="0.00,-8.00 6.93,-4.00 6.93,4.00 0.00,8.00 -6.93,4.00 -6.93,-4.00" fill="#e00000"/></svg>
<div class="t " style="left:3221px;top:64.5px;font-size:23px;color:#222;">Einfach</div>
<div class="t " style="left:3373px;top:64.5px;font-size:23px;color:#222;">Erweitert</div>
<div class="t " style="left:3543px;top:64.5px;font-size:23px;color:#222;font-weight:bold">Experte</div>
<div class="t " style="left:3004px;top:98.5px;font-size:23px;color:#222;">Druckeinstellungen:</div>
<div class="t " style="left:3004px;top:181.5px;font-size:23px;color:#222;">Filament:</div>
<div class="t " style="left:3004px;top:263.5px;font-size:23px;color:#222;">Drucker:</div>
<div class="b" style="left:3005px;top:127px;width:782px;height:44px;background:#ebebeb;border:2px solid #666"></div>
<svg class="b" style="left:3757px;top:143px" width="24" height="14"><path d="M1.5,2 L12,10.5 L22.5,2" fill="none" stroke="#555" stroke-width="3"/></svg>
<div class="b" style="left:3005px;top:209px;width:782px;height:44px;background:#ebebeb;border:2px solid #666"></div>
<svg class="b" style="left:3757px;top:225px" width="24" height="14"><path d="M1.5,2 L12,10.5 L22.5,2" fill="none" stroke="#555" stroke-width="3"/></svg>
<div class="b" style="left:3005px;top:291px;width:782px;height:44px;background:#ebebeb;border:2px solid #666"></div>
<svg class="b" style="left:3757px;top:307px" width="24" height="14"><path d="M1.5,2 L12,10.5 L22.5,2" fill="none" stroke="#555" stroke-width="3"/></svg>
<svg class="b" style="left:3022.0px;top:134.0px" width="32" height="32" viewBox="-17.23076923076923 -17.23076923076923 34.46153846153846 34.46153846153846"><circle r="10.4" fill="none" stroke="#7a7a7a" stroke-width="2.2"/><g fill="#7a7a7a"><path d="M-3,-10.2 L-2.2,-14 H2.2 L3,-10.2Z" transform="rotate(0)"/><path d="M-3,-10.2 L-2.2,-14 H2.2 L3,-10.2Z" transform="rotate(45)"/><path d="M-3,-10.2 L-2.2,-14 H2.2 L3,-10.2Z" transform="rotate(90)"/><path d="M-3,-10.2 L-2.2,-14 H2.2 L3,-10.2Z" transform="rotate(135)"/><path d="M-3,-10.2 L-2.2,-14 H2.2 L3,-10.2Z" transform="rotate(180)"/><path d="M-3,-10.2 L-2.2,-14 H2.2 L3,-10.2Z" transform="rotate(225)"/><path d="M-3,-10.2 L-2.2,-14 H2.2 L3,-10.2Z" transform="rotate(270)"/><path d="M-3,-10.2 L-2.2,-14 H2.2 L3,-10.2Z" transform="rotate(315)"/></g><circle r="6.6" fill="none" stroke="#ec6b1f" stroke-width="2.0"/><g fill="#ec6b1f"><circle cx="0" cy="-7.4" r="1.2" transform="rotate(0)"/><circle cx="0" cy="-7.4" r="1.2" transform="rotate(45)"/><circle cx="0" cy="-7.4" r="1.2" transform="rotate(90)"/><circle cx="0" cy="-7.4" r="1.2" transform="rotate(135)"/><circle cx="0" cy="-7.4" r="1.2" transform="rotate(180)"/><circle cx="0" cy="-7.4" r="1.2" transform="rotate(225)"/><circle cx="0" cy="-7.4" r="1.2" transform="rotate(270)"/><circle cx="0" cy="-7.4" r="1.2" transform="rotate(315)"/></g></svg>
<svg class="b" style="left:3070px;top:136px" width="25" height="28" viewBox="0 0 25 28"><path d="M5,12 V8 A7.5,7.5 0 0 1 20,8 V12" fill="none" stroke="#777" stroke-width="4"/><rect x="1" y="11" width="23" height="17" rx="2" fill="#777"/><circle cx="12" cy="20" r="2.5" fill="#ddd"/><rect x="12" y="19" width="6" height="2" fill="#ddd"/></svg>
<div class="t " style="left:3109px;top:138.5px;font-size:23px;color:#222;">0.20mm SPEED (geändert)</div>
<div class="b" style="left:3014px;top:216px;width:48px;height:32px;background:#ff7f00;border:1px solid #999"></div>
<div class="t " style="left:3109px;top:220.5px;font-size:23px;color:#222;">SUNLU PLA+</div>
<svg class="b" style="left:3015px;top:299px" width="30" height="30" viewBox="0 0 30 30"><rect x="1.5" y="1.5" width="27" height="27" fill="#ececec" stroke="#777" stroke-width="2"/><path d="M1.5,10 H28.5" stroke="#777" stroke-width="2"/><rect x="3" y="4" width="8" height="8" fill="#ec6b1f"/></svg>
<div class="t " style="left:3089px;top:302.5px;font-size:23px;color:#222;">MK4 * Original Prusa MK4 Input Shaper 0.4 nozzle</div>
<svg class="b" style="left:3795.0px;top:133.0px" width="34" height="34" viewBox="-17.0 -17.0 34.0 34.0"><circle r="10.4" fill="none" stroke="#7a7a7a" stroke-width="2.2"/><g fill="#7a7a7a"><path d="M-3,-10.2 L-2.2,-14 H2.2 L3,-10.2Z" transform="rotate(0)"/><path d="M-3,-10.2 L-2.2,-14 H2.2 L3,-10.2Z" transform="rotate(45)"/><path d="M-3,-10.2 L-2.2,-14 H2.2 L3,-10.2Z" transform="rotate(90)"/><path d="M-3,-10.2 L-2.2,-14 H2.2 L3,-10.2Z" transform="rotate(135)"/><path d="M-3,-10.2 L-2.2,-14 H2.2 L3,-10.2Z" transform="rotate(180)"/><path d="M-3,-10.2 L-2.2,-14 H2.2 L3,-10.2Z" transform="rotate(225)"/><path d="M-3,-10.2 L-2.2,-14 H2.2 L3,-10.2Z" transform="rotate(270)"/><path d="M-3,-10.2 L-2.2,-14 H2.2 L3,-10.2Z" transform="rotate(315)"/></g><circle r="6.6" fill="none" stroke="#ec6b1f" stroke-width="2.0"/><g fill="#ec6b1f"><circle cx="0" cy="-7.4" r="1.2" transform="rotate(0)"/><circle cx="0" cy="-7.4" r="1.2" transform="rotate(45)"/><circle cx="0" cy="-7.4" r="1.2" transform="rotate(90)"/><circle cx="0" cy="-7.4" r="1.2" transform="rotate(135)"/><circle cx="0" cy="-7.4" r="1.2" transform="rotate(180)"/><circle cx="0" cy="-7.4" r="1.2" transform="rotate(225)"/><circle cx="0" cy="-7.4" r="1.2" transform="rotate(270)"/><circle cx="0" cy="-7.4" r="1.2" transform="rotate(315)"/></g></svg>
<svg class="b" style="left:3795.0px;top:215.0px" width="34" height="34" viewBox="-17.0 -17.0 34.0 34.0"><circle r="10.4" fill="none" stroke="#7a7a7a" stroke-width="2.2"/><g fill="#7a7a7a"><path d="M-3,-10.2 L-2.2,-14 H2.2 L3,-10.2Z" transform="rotate(0)"/><path d="M-3,-10.2 L-2.2,-14 H2.2 L3,-10.2Z" transform="rotate(45)"/><path d="M-3,-10.2 L-2.2,-14 H2.2 L3,-10.2Z" transform="rotate(90)"/><path d="M-3,-10.2 L-2.2,-14 H2.2 L3,-10.2Z" transform="rotate(135)"/><path d="M-3,-10.2 L-2.2,-14 H2.2 L3,-10.2Z" transform="rotate(180)"/><path d="M-3,-10.2 L-2.2,-14 H2.2 L3,-10.2Z" transform="rotate(225)"/><path d="M-3,-10.2 L-2.2,-14 H2.2 L3,-10.2Z" transform="rotate(270)"/><path d="M-3,-10.2 L-2.2,-14 H2.2 L3,-10.2Z" transform="rotate(315)"/></g><circle r="6.6" fill="none" stroke="#ec6b1f" stroke-width="2.0"/><g fill="#ec6b1f"><circle cx="0" cy="-7.4" r="1.2" transform="rotate(0)"/><circle cx="0" cy="-7.4" r="1.2" transform="rotate(45)"/><circle cx="0" cy="-7.4" r="1.2" transform="rotate(90)"/><circle cx="0" cy="-7.4" r="1.2" transform="rotate(135)"/><circle cx="0" cy="-7.4" r="1.2" transform="rotate(180)"/><circle cx="0" cy="-7.4" r="1.2" transform="rotate(225)"/><circle cx="0" cy="-7.4" r="1.2" transform="rotate(270)"/><circle cx="0" cy="-7.4" r="1.2" transform="rotate(315)"/></g></svg>
<svg class="b" style="left:3795.0px;top:297.0px" width="34" height="34" viewBox="-17.0 -17.0 34.0 34.0"><circle r="10.4" fill="none" stroke="#7a7a7a" stroke-width="2.2"/><g fill="#7a7a7a"><path d="M-3,-10.2 L-2.2,-14 H2.2 L3,-10.2Z" transform="rotate(0)"/><path d="M-3,-10.2 L-2.2,-14 H2.2 L3,-10.2Z" transform="rotate(45)"/><path d="M-3,-10.2 L-2.2,-14 H2.2 L3,-10.2Z" transform="rotate(90)"/><path d="M-3,-10.2 L-2.2,-14 H2.2 L3,-10.2Z" transform="rotate(135)"/><path d="M-3,-10.2 L-2.2,-14 H2.2 L3,-10.2Z" transform="rotate(180)"/><path d="M-3,-10.2 L-2.2,-14 H2.2 L3,-10.2Z" transform="rotate(225)"/><path d="M-3,-10.2 L-2.2,-14 H2.2 L3,-10.2Z" transform="rotate(270)"/><path d="M-3,-10.2 L-2.2,-14 H2.2 L3,-10.2Z" transform="rotate(315)"/></g><circle r="6.6" fill="none" stroke="#ec6b1f" stroke-width="2.0"/><g fill="#ec6b1f"><circle cx="0" cy="-7.4" r="1.2" transform="rotate(0)"/><circle cx="0" cy="-7.4" r="1.2" transform="rotate(45)"/><circle cx="0" cy="-7.4" r="1.2" transform="rotate(90)"/><circle cx="0" cy="-7.4" r="1.2" transform="rotate(135)"/><circle cx="0" cy="-7.4" r="1.2" transform="rotate(180)"/><circle cx="0" cy="-7.4" r="1.2" transform="rotate(225)"/><circle cx="0" cy="-7.4" r="1.2" transform="rotate(270)"/><circle cx="0" cy="-7.4" r="1.2" transform="rotate(315)"/></g></svg>
<div class="t " style="left:3013px;top:356.5px;font-size:23px;color:#222;">Stützen:</div>
<div class="b" style="left:3102px;top:346px;width:685px;height:43px;background:#ebebeb;border:2px solid #666"></div>
<svg class="b" style="left:3757px;top:361px" width="24" height="14"><path d="M1.5,2 L12,10.5 L22.5,2" fill="none" stroke="#555" stroke-width="3"/></svg>
<div class="t " style="left:3110px;top:356.5px;font-size:23px;color:#222;">Kein</div>
<div class="t " style="left:3013px;top:409.5px;font-size:23px;color:#222;">Infill:</div>
<div class="b" style="left:3066px;top:399px;width:154px;height:44px;background:#ebebeb;border:2px solid #666"></div>
<svg class="b" style="left:3190px;top:414px" width="24" height="14"><path d="M1.5,2 L12,10.5 L22.5,2" fill="none" stroke="#555" stroke-width="3"/></svg>
<div class="t " style="left:3078px;top:409.5px;font-size:23px;color:#222;">10%</div>
<div class="t " style="left:3272px;top:409.5px;font-size:23px;color:#222;">Rand:</div>
<div class="b" style="left:3334px;top:408px;width:28px;height:28px;background:#f4f4f4;border:2px solid #777;border-radius:2px"></div>
<div class="b" style="left:3004px;top:450px;width:830px;height:804px;background:#fff"></div>
<div class="b" style="left:3834px;top:56px;width:6px;height:2104px;background:#e6e5e4;border-right:2px solid #d6d5d4"></div>
<div class="t " style="left:3058px;top:466.5px;font-size:23px;color:#222;">Name</div>
<div class="t " style="left:3619px;top:466.5px;font-size:23px;color:#222;">Bearbeitung</div>
<div class="b" style="left:3453px;top:463px;width:2px;height:30px;background:#e0e0e0"></div>
<div class="b" style="left:3547px;top:463px;width:2px;height:30px;background:#e0e0e0"></div>
<div class="b" style="left:3813px;top:463px;width:2px;height:30px;background:#e0e0e0"></div>
<div class="b" style="left:3004px;top:504px;width:830px;height:2px;background:#e6e6e6"></div>
<div class="b" style="left:3024px;top:517px;width:789px;height:32px;background:#dcdcdc;border-radius:9px"></div>
<div class="t " style="left:3055px;top:521.5px;font-size:23px;color:#222;">Lid.stl</div>
<svg class="b" style="left:3486px;top:524px" width="28" height="18" viewBox="0 0 28 18"><path d="M1.5,9 C6,2 22,2 26.5,9 C22,16 6,16 1.5,9Z" fill="none" stroke="#777" stroke-width="2.4"/><circle cx="14" cy="9" r="4" fill="#777"/></svg>
<svg class="b" style="left:3668px;top:518px" width="28" height="30" viewBox="0 0 28 30"><rect x="2" y="10" width="17" height="17" rx="2" fill="none" stroke="#777" stroke-width="2"/><circle cx="20" cy="7" r="4.5" fill="#fff" stroke="#ec6b1f" stroke-width="2.2"/></svg>
<div class="t " style="left:3035px;top:1266.5px;font-size:23px;color:#222;">Objektbearbeitung</div>
<div class="b" style="left:3004px;top:1299px;width:830px;height:332px;background:#e4e3e2;border-radius:10px;border:1px solid #dddcdb"></div>
<div class="b" style="left:3027px;top:1310px;width:296px;height:43px;background:#ebebeb;border:2px solid #666"></div>
<svg class="b" style="left:3293px;top:1325px" width="24" height="14"><path d="M1.5,2 L12,10.5 L22.5,2" fill="none" stroke="#555" stroke-width="3"/></svg>
<div class="t " style="left:3037px;top:1320.5px;font-size:23px;color:#222;">Weltkoordinaten</div>
<div class="t " style="left:3364px;top:1321.0px;font-size:22px;color:#222;font-weight:bold">X</div>
<svg class="b" style="left:3382px;top:1317px" width="34" height="32" viewBox="0 0 34 32"><path d="M11.7,5 H6.5 Q4,5 4,7.5 V24.2 Q4,26.7 6.5,26.7 H11.7 M20.2,5 H25.5 Q28,5 28,7.5 V24.2 Q28,26.7 25.5,26.7 H20.2" fill="none" stroke="#000" stroke-width="3.9" stroke-linecap="round"/><path d="M16,1.3 V5.5 M16,12.4 V17.6 M16,24.5 V28.4" stroke="#000" stroke-width="2.4" stroke-linecap="round"/></svg>
<div class="t " style="left:3489px;top:1321.0px;font-size:22px;color:#222;font-weight:bold">Y</div>
<svg class="b" style="left:3507px;top:1317px" width="34" height="32" viewBox="0 0 34 32"><path d="M11.7,5 H6.5 Q4,5 4,7.5 V24.2 Q4,26.7 6.5,26.7 H11.7 M20.2,5 H25.5 Q28,5 28,7.5 V24.2 Q28,26.7 25.5,26.7 H20.2" fill="none" stroke="#000" stroke-width="3.9" stroke-linecap="round"/><path d="M16,1.3 V5.5 M16,12.4 V17.6 M16,24.5 V28.4" stroke="#000" stroke-width="2.4" stroke-linecap="round"/></svg>
<div class="t " style="left:3611px;top:1321.0px;font-size:22px;color:#222;font-weight:bold">Z</div>
<svg class="b" style="left:3629px;top:1317px" width="34" height="32" viewBox="0 0 34 32"><path d="M11.7,5 H6.5 Q4,5 4,7.5 V24.2 Q4,26.7 6.5,26.7 H11.7 M20.2,5 H25.5 Q28,5 28,7.5 V24.2 Q28,26.7 25.5,26.7 H20.2" fill="none" stroke="#000" stroke-width="3.9" stroke-linecap="round"/><path d="M16,1.3 V5.5 M16,12.4 V17.6 M16,24.5 V28.4" stroke="#000" stroke-width="2.4" stroke-linecap="round"/></svg>
<div class="t " style="left:3027px;top:1371.5px;font-size:23px;color:#222;">Position:</div>
<div class="t " style="left:3027px;top:1419.5px;font-size:23px;color:#222;">Drehen (relativ):</div>
<div class="t " style="left:3058px;top:1467.5px;font-size:23px;color:#222;">Skalierungsfaktoren:</div>
<div class="t " style="left:3058px;top:1515.5px;font-size:23px;color:#222;">Größe [Welt]:</div>
<div class="b" style="left:3334px;top:1364px;width:110px;height:42px;background:#ebebeb;border:2px solid #666"></div>
<div class="t " style="left:3346px;top:1374.5px;font-size:23px;color:#222;">125</div>
<div class="b" style="left:3456px;top:1364px;width:110px;height:42px;background:#ebebeb;border:2px solid #666"></div>
<div class="t " style="left:3468px;top:1374.5px;font-size:23px;color:#222;">105</div>
<div class="b" style="left:3578px;top:1364px;width:110px;height:42px;background:#ebebeb;border:2px solid #666"></div>
<div class="t " style="left:3590px;top:1374.5px;font-size:23px;color:#222;">1,9</div>
<div class="t " style="left:3698px;top:1372.5px;font-size:23px;color:#222;">mm</div>
<div class="b" style="left:3334px;top:1418px;width:110px;height:42px;background:#ebebeb;border:2px solid #666"></div>
<div class="t " style="left:3346px;top:1428.5px;font-size:23px;color:#222;">0</div>
<div class="b" style="left:3456px;top:1418px;width:110px;height:42px;background:#ebebeb;border:2px solid #666"></div>
<div class="t " style="left:3468px;top:1428.5px;font-size:23px;color:#222;">0</div>
<div class="b" style="left:3578px;top:1418px;width:110px;height:42px;background:#ebebeb;border:2px solid #666"></div>
<div class="t " style="left:3590px;top:1428.5px;font-size:23px;color:#222;">0</div>
<div class="t " style="left:3698px;top:1419.5px;font-size:23px;color:#222;">°</div>
<div class="b" style="left:3334px;top:1472px;width:110px;height:42px;background:#ebebeb;border:2px solid #666"></div>
<div class="t " style="left:3346px;top:1482.5px;font-size:23px;color:#222;">100</div>
<div class="b" style="left:3456px;top:1472px;width:110px;height:42px;background:#ebebeb;border:2px solid #666"></div>
<div class="t " style="left:3468px;top:1482.5px;font-size:23px;color:#222;">100</div>
<div class="b" style="left:3578px;top:1472px;width:110px;height:42px;background:#ebebeb;border:2px solid #666"></div>
<div class="t " style="left:3590px;top:1482.5px;font-size:23px;color:#222;">100</div>
<div class="t " style="left:3698px;top:1480.5px;font-size:23px;color:#222;">%</div>
<div class="b" style="left:3334px;top:1526px;width:110px;height:42px;background:#ebebeb;border:2px solid #666"></div>
<div class="t " style="left:3346px;top:1536.5px;font-size:23px;color:#222;">84,56</div>
<div class="b" style="left:3456px;top:1526px;width:110px;height:42px;background:#ebebeb;border:2px solid #666"></div>
<div class="t " style="left:3468px;top:1536.5px;font-size:23px;color:#222;">84,56</div>
<div class="b" style="left:3578px;top:1526px;width:110px;height:42px;background:#ebebeb;border:2px solid #666"></div>
<div class="t " style="left:3590px;top:1536.5px;font-size:23px;color:#222;">3,8</div>
<div class="t " style="left:3698px;top:1534.5px;font-size:23px;color:#222;">mm</div>
<svg class="b" style="left:3746px;top:1416px" width="28" height="30" viewBox="0 0 28 30"><path d="M6,12 A9.5,9.5 0 1 0 14,7" fill="none" stroke="#ec6b1f" stroke-width="3.4"/><polygon points="10,2 18,7.5 10,12" fill="#ec6b1f"/></svg>
<svg class="b" style="left:3029px;top:1486px" width="26" height="30" viewBox="0 0 26 30"><path d="M6,13 V9 A7,7 0 0 1 20,9 V13" fill="none" stroke="#777" stroke-width="4"/><rect x="1.5" y="12" width="23" height="16" rx="2.5" fill="#777"/><circle cx="11" cy="20" r="2.4" fill="#ddd"/><rect x="11" y="19" width="6" height="2" fill="#ddd"/></svg>
<div class="b" style="left:3028px;top:1581px;width:28px;height:28px;background:#ebebeb;border:2px solid #777;border-radius:2px"></div>
<div class="t " style="left:3064px;top:1583.5px;font-size:23px;color:#888;">Zoll</div>
<div class="t " style="left:3027px;top:1645.5px;font-size:23px;color:#222;">Info</div>
<div class="b" style="left:3004px;top:1677px;width:830px;height:132px;background:#e4e3e2;border-radius:10px;border:1px solid #dddcdb"></div>
<div class="t " style="left:3027px;top:1688.5px;font-size:23px;color:#222;">Größe:</div>
<div class="t " style="left:3147px;top:1688.5px;font-size:23px;color:#222;">84,56 x 84,56 x 3,80</div>
<div class="t " style="left:3396px;top:1688.5px;font-size:23px;color:#222;">Volumen:</div>
<div class="t " style="left:3524px;top:1688.5px;font-size:23px;color:#222;">17735,61</div>
<div class="t " style="left:3027px;top:1727.5px;font-size:23px;color:#222;">Flächen:</div>
<div class="t " style="left:3147px;top:1727.5px;font-size:23px;color:#222;">1224 (1 Wand)</div>
<div class="t " style="left:3030px;top:1763.5px;font-size:23px;color:#222;">Keine Fehler gefunden</div>
<div class="t " style="left:3027px;top:1823.5px;font-size:23px;color:#222;">Slice-Info</div>
<div class="b" style="left:3004px;top:1855px;width:830px;height:238px;background:#e4e3e2;border-radius:10px;border:1px solid #dddcdb"></div>
<div class="t " style="left:3027px;top:1867.5px;font-size:23px;color:#222;">Filamentbedarf (g)</div>
<div class="t " style="left:3300px;top:1867.5px;font-size:23px;color:#222;">13,05</div>
<div class="t " style="left:3027px;top:1904.5px;font-size:23px;color:#222;">Filamentbedarf (Meter)</div>
<div class="t " style="left:3300px;top:1904.5px;font-size:23px;color:#222;">4,38</div>
<div class="t " style="left:3027px;top:1942.5px;font-size:23px;color:#222;">Filamentbedarf (mm³)</div>
<div class="t " style="left:3300px;top:1942.5px;font-size:23px;color:#222;">10524,04</div>
<div class="t " style="left:3027px;top:1980.5px;font-size:23px;color:#222;">Kosten</div>
<div class="t " style="left:3300px;top:1980.5px;font-size:23px;color:#222;">0,33</div>
<div class="t " style="left:3027px;top:2018.5px;font-size:23px;color:#222;">Erwartete Druckzeit:</div>
<div class="t " style="left:3027px;top:2046.5px;font-size:23px;color:#222;">&nbsp;&nbsp;- Normaler Modus</div>
<div class="t " style="left:3300px;top:2046.5px;font-size:23px;color:#222;">23m</div>
<div class="b" style="left:3004px;top:2104px;width:756px;height:39px;background:#fff;border-radius:8px;box-shadow:0 1px 1.5px rgba(0,0,0,0.3)"></div>
<div class="t" style="left:2982px;width:800px;text-align:center;top:2112.5px;font-size:23px;color:#222;font-weight:bold">Export G-Code</div>
<div class="b" style="left:3770px;top:2104px;width:63px;height:39px;background:#fff;border-radius:8px;box-shadow:0 1px 1.5px rgba(0,0,0,0.3)"></div>
<div class="t" style="left:3787px;top:2108px;font-size:29px;font-weight:bold;color:#666;line-height:1">G</div><svg class="b" style="left:3808px;top:2113px" width="12" height="20"><polygon points="0,0 11,10 0,20" fill="#ec6b1f"/></svg>
<div class="b" style="left:0;top:2154px;width:3840px;height:6px;background:#e0dfde"></div>
</div></body></html>
